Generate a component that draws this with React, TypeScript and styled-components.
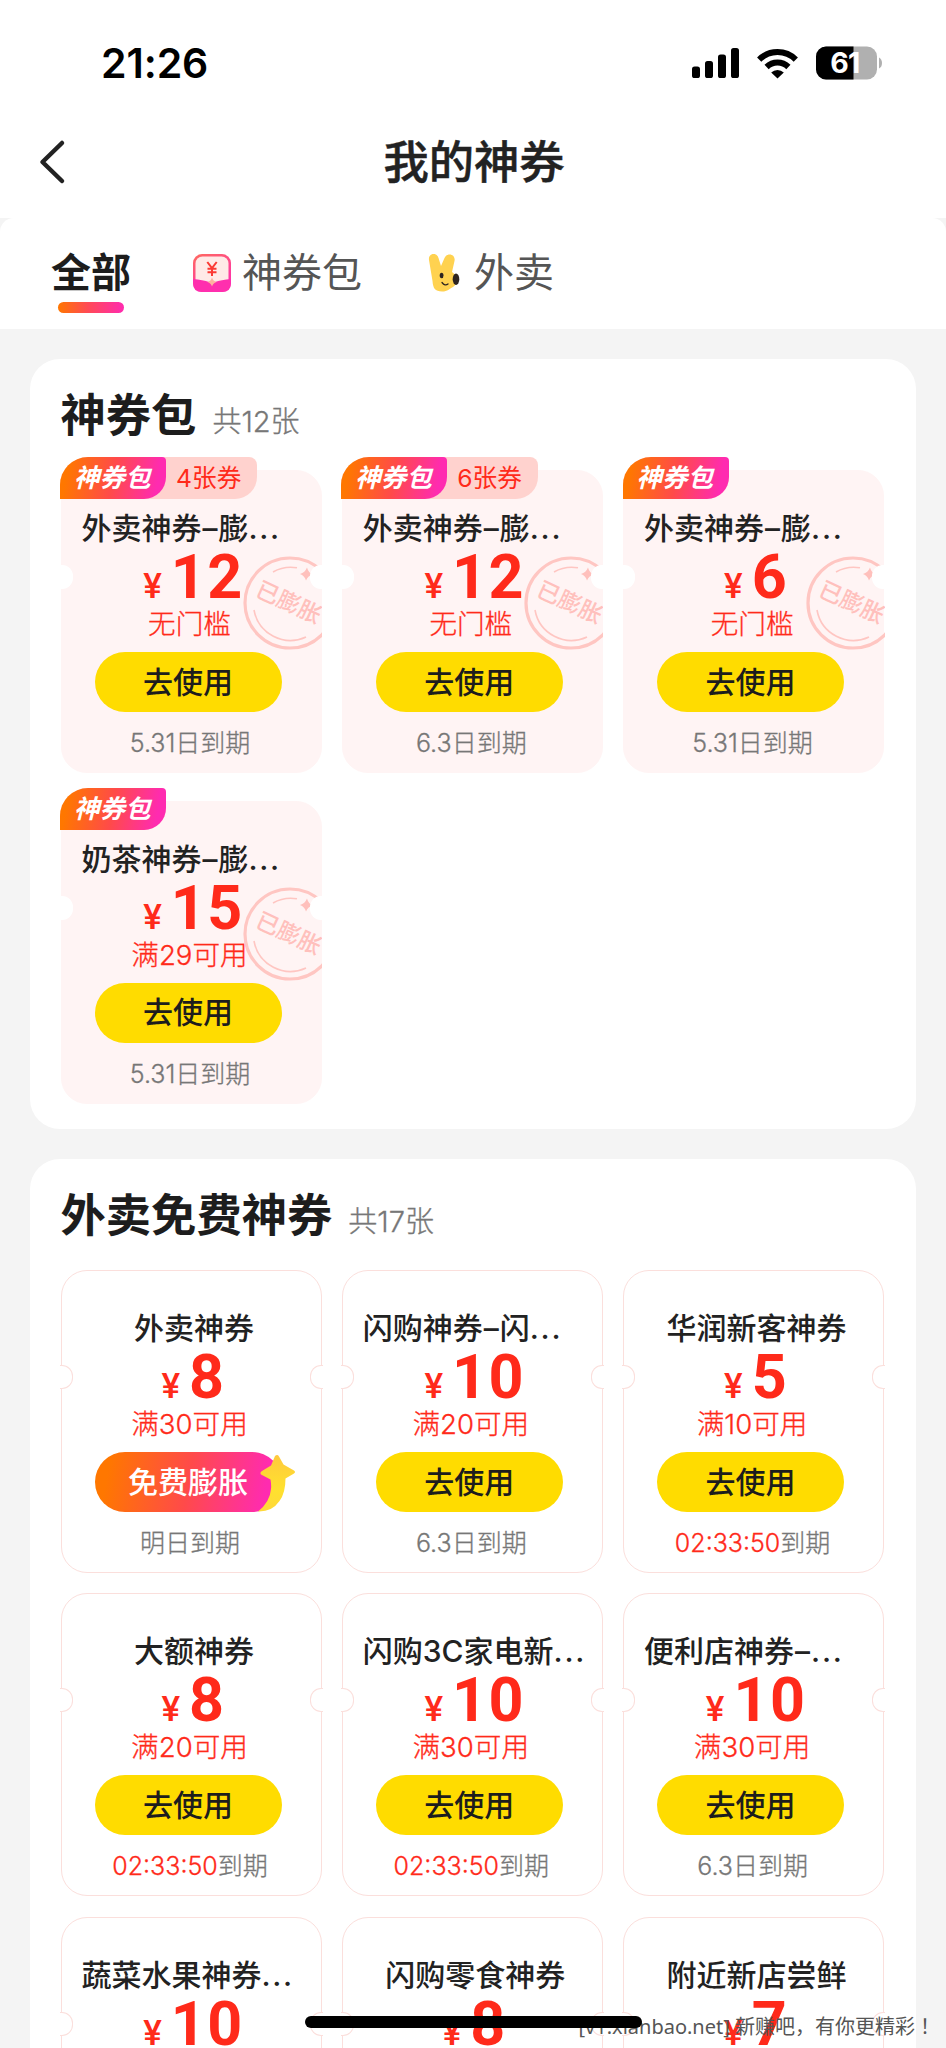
import React from "react";
import styled, { createGlobalStyle, css } from "styled-components";

const GlobalStyle = createGlobalStyle`
  * { box-sizing: border-box; }
  html, body { margin: 0; padding: 0; background: #f4f4f4; }
  body { font-family: Inter, "Noto Sans CJK SC", sans-serif; color: #222; }
`;

const BRAND = "linear-gradient(100deg, #ff7700 8%, #ff4a4a 50%, #ff2bb0 90%)";

const Screen = styled.div`
  position: relative;
  width: 946px;
  height: 2048px;
  overflow: hidden;
  background: #f4f4f4;
`;

const StatusBar = styled.div`
  height: 108px;
  padding: 18px 64px 0 101px;
  display: flex;
  align-items: center;
  justify-content: space-between;
  background: #fff;
`;

const Clock = styled.div`
  font-size: 41px;
  font-weight: 600;
  color: #000;
  letter-spacing: -0.1px;
`;

const StatusIcons = styled.div`
  display: flex;
  align-items: center;
`;

const NavBar = styled.header`
  height: 110px;
  display: grid;
  grid-template-columns: 122px 1fr 120px;
  align-items: center;
  background: #fff;
`;

const BackButton = styled.button`
  border: 0;
  background: none;
  padding: 0 0 2px 38px;
  height: 48px;
  display: flex;
  align-items: center;
`;

const PageTitle = styled.h1`
  margin: 0;
  text-align: center;
  font-size: 45.3px;
  line-height: 60px;
  font-weight: 500;
  -webkit-text-stroke: 0.5px #222;
`;

const TabBar = styled.nav`
  height: 111px;
  padding: 26px 0 0 51px;
  display: flex;
  background: #fff;
  border-radius: 14px 14px 0 0;
`;

const Tab = styled.div<{ $active?: boolean; $gap: number }>`
  height: 76px;
  margin-right: ${(p) => p.$gap}px;
  display: flex;
  align-items: flex-start;
  font-size: 40px;
  line-height: 58px;
  color: ${(p) => (p.$active ? "#1d1d1d" : "#555")};
  font-weight: ${(p) => (p.$active ? 700 : 400)};
  ${(p) =>
    p.$active &&
    css`
      flex-direction: column;
      align-items: center;
      &::after {
        content: "";
        width: 66px;
        height: 11px;
        border-radius: 6px;
        background: linear-gradient(90deg, #ff7700, #ff4a55 45%, #ff2bb0);
      }
    `}
  svg { margin-top: 10px; flex: none; }
`;

const Section = styled.section<{ $height: number }>`
  width: 886px;
  height: ${(p) => p.$height}px;
  margin: 30px 0 0 30px;
  padding: 28px 30.5px 0;
  border-radius: 30px;
  background: #fff;
`;

const SectionHead = styled.div`
  height: 56px;
  display: flex;
  align-items: baseline;
  gap: 17px;
  line-height: 57px;
`;

const SectionTitle = styled.h2`
  margin: 0;
  font-size: 45.3px;
  font-weight: 700;
  color: #1d1d1d;
`;

const SectionCount = styled.span`
  margin-left: -1px;
  font-size: 29px;
  font-weight: 300;
  color: #777;
  -webkit-text-stroke: 0.3px #777;
`;

const Grid = styled.div<{ $rowGap: number }>`
  margin-top: 27px;
  display: grid;
  grid-template-columns: repeat(3, 261px);
  column-gap: 20.3px;
  row-gap: ${(p) => p.$rowGap}px;
`;

const Ticket = styled.article<{ $filled?: boolean }>`
  --line: #fbdfdc;
  position: relative;
  height: 303px;
  border-radius: 26px;
  background: ${(p) => (p.$filled ? "#fff4f4" : "#fff")};
  border: 1.5px solid ${(p) => (p.$filled ? "#fff4f4" : "var(--line)")};
  padding-top: 35px;
  display: flex;
  flex-direction: column;
  align-items: center;

  &::before,
  &::after {
    content: "";
    position: absolute;
    z-index: 2;
    top: 94px;
    width: 12px;
    height: 22px;
    background: #fff;
    border: 1.5px solid ${(p) => (p.$filled ? "#fff" : "var(--line)")};
  }
  &::before { left: -2px; border-left: 0; border-radius: 0 11px 11px 0; }
  &::after { right: -2px; border-right: 0; border-radius: 11px 0 0 11px; }
`;

const TicketName = styled.div<{ $cut?: boolean }>`
  width: 225px;
  margin-left: 6px;
  height: 44px;
  line-height: 44px;
  font-size: 30px;
  font-weight: 500;
  white-space: nowrap;
  text-align: ${(p) => (p.$cut ? "left" : "center")};
`;

const Dots = styled.span`
  letter-spacing: 1.7px;
`;

const Dash = styled.span`
  display: inline-block;
  padding: 0 1px;
`;

const Amount = styled.div`
  height: 57px;
  margin-left: 5px;
  display: flex;
  align-items: baseline;
  gap: 9px;
  font-family: Roboto, sans-serif;
  color: #ff2a1a;
  line-height: 55px;
`;

const Currency = styled.span`
  font-size: 35px;
  font-weight: 500;
`;

const Digits = styled.span`
  font-size: 61px;
  font-weight: 700;
  letter-spacing: 1.5px;
`;

const Condition = styled.div`
  height: 32px;
  margin-right: 3px;
  line-height: 35px;
  font-size: 27.6px;
  font-weight: 300;
  color: #ff2a1a;
  -webkit-text-stroke: 0.3px #ff2a1a;
`;

const UseButton = styled.button<{ $boost?: boolean }>`
  position: relative;
  flex: none;
  width: 187px;
  height: 60px;
  margin: 13px 6px 0 0;
  padding: 0;
  border: 0;
  border-radius: 30px;
  font-family: inherit;
  font-size: 30px;
  font-weight: 500;
  line-height: 59px;
  color: ${(p) => (p.$boost ? "#fff" : "#1d1d1d")};
  background: ${(p) => (p.$boost ? BRAND : "#ffdc00")};
  svg { position: absolute; right: -13px; top: 1px; }
`;

const Expiry = styled.div`
  height: 32px;
  margin: 15px 2px 0 0;
  line-height: 32px;
  font-size: 25px;
  font-weight: 300;
  color: #777;
  -webkit-text-stroke: 0.3px currentColor;
`;

const Countdown = styled.span`
  color: #ff2a1a;
`;

const Ribbon = styled.div`
  position: absolute;
  left: -1.5px;
  top: -14px;
  height: 42px;
  display: flex;
  border-radius: 28px 8px 22px 0;
  background: #ffd2ce;
`;

const RibbonLabel = styled.span`
  width: 106px;
  padding-left: 14px;
  border-radius: 28px 4px 22px 0;
  background: ${BRAND};
  color: #fff;
  font-size: 25.5px;
  font-weight: 700;
  font-style: italic;
  line-height: 42px;
`;

const RibbonCount = styled.span`
  width: 91px;
  padding-left: 10px;
  font-size: 24.7px;
  line-height: 43px;
  color: #ff2a1a;
`;

const StampClip = styled.div`
  position: absolute;
  right: -1.5px;
  top: 84px;
  width: 80px;
  height: 98px;
  overflow: hidden;
`;

const HomeIndicator = styled.div`
  position: absolute;
  z-index: 4;
  left: 305px;
  top: 2016px;
  width: 337px;
  height: 12px;
  border-radius: 6px;
  background: #000;
`;

const Watermark = styled.div`
  position: absolute;
  z-index: 3;
  right: 11px;
  top: 2012px;
  font: 20px/30px "Noto Sans", "Noto Sans CJK JP", sans-serif;
  color: #555;
  white-space: nowrap;
`;

const SignalIcon = () => (
  <svg width="48" height="30" viewBox="0 0 48 30">
    <rect x="0" y="18.5" width="8" height="11.5" rx="2.6" />
    <rect x="13" y="13" width="8" height="17" rx="2.6" />
    <rect x="26" y="6.5" width="8" height="23.5" rx="2.6" />
    <rect x="39" y="0" width="8" height="30" rx="2.6" />
  </svg>
);

const WifiIcon = () => (
  <svg width="41" height="31" viewBox="0 0 41 31" fill="none" stroke="#000" strokeWidth="6" style={{ marginLeft: 17 }}>
    <path d="M2.2 11.600A26 26 0 0 1 38.800 11.600" />
    <path d="M9.600 19A15.600 15.600 0 0 1 31.400 19" />
    <path d="M20.500 30.500L14.200 24.500A9 9 0 0 1 26.800 24.500Z" fill="#000" stroke="none" />
  </svg>
);

const BatteryIcon = () => (
  <svg width="66" height="34" viewBox="0 0 66 34" style={{ marginLeft: 18 }}>
    <rect x="0" y="0.5" width="61" height="33" rx="10" fill="#b0b0b0" />
    <path d="M10 .5H37.500V33.500H10A10 10 0 0 1 0 23.500V10.500A10 10 0 0 1 10 .5Z" fill="#000" />
    <path d="M63 11.500Q66 13 66 17T63 22.500Z" fill="#b0b0b0" />
    <text x="28.800" y="27" textAnchor="middle" fontFamily="Inter" fontWeight="700" fontSize="28.500" letterSpacing="-0.800" fill="#fff">61</text>
  </svg>
);

const PackIcon = () => (
  <svg width="38" height="38" viewBox="0 0 38 38" style={{ marginRight: 11 }}>
    <defs>
      <linearGradient id="pack" x1="0" y1="0" x2="0.5" y2="1">
        <stop offset="0" stopColor="#ff6a5e" />
        <stop offset="1" stopColor="#ff2fae" />
      </linearGradient>
    </defs>
    <rect width="38" height="38" rx="9" fill="url(#pack)" />
    <rect x="2.500" y="2.500" width="33" height="30" rx="7" fill="#ffeae7" />
    <path d="M0 25Q10 26 16 28Q19 30 22 28Q28 26 38 25V29Q38 38 29 38H9Q0 38 0 29Z" fill="#ff2fae" />
    <path d="M19 23.500Q20 27 23.500 28Q20 29 19 32.500Q18 29 14.500 28Q18 27 19 23.500Z" fill="#ffb3a0" />
    <path d="M14.300 8L19 14.200L23.700 8M19 14V22M14.500 14.700H23.500M14.500 18.300H23.500" stroke="#fb3a34" strokeWidth="2" fill="none" />
  </svg>
);

const RabbitIcon = () => (
  <svg width="34" height="38" viewBox="0 0 34 38" style={{ marginRight: 12 }}>
    <path d="M1 6C0-1 9-2 10.500 4L13 12L16.500 4C19-2 28 0 26.500 7L24 18C30 22 30 30 25 33C21 35 20 37.500 14 37.500C7 37.500 5 34 4.500 27Z" fill="#ffd250" />
    <ellipse cx="28" cy="25.200" rx="3.300" ry="5.800" fill="#2d2420" />
    <ellipse cx="13.600" cy="21.500" rx="1.900" ry="2.800" fill="#2d2420" />
    <path d="M14 28.500Q17 32.500 20 30" stroke="#2d2420" strokeWidth="1.300" fill="none" strokeLinecap="round" />
  </svg>
);

const StarTail = () => (
  <svg width="40" height="60" viewBox="0 0 40 60">
    <defs>
      <linearGradient id="tail" x1="0.3" y1="0" x2="0.3" y2="1">
        <stop offset="0" stopColor="#ffc93e" />
        <stop offset="0.6" stopColor="#ffe12e" />
        <stop offset="1" stopColor="#ffd83a" />
      </linearGradient>
    </defs>
    <path d="M20 3Q22.500 1 24 3.500L28.500 11.500L39 17.500Q41 19 39 20.500L30.500 25.500Q30.500 40 24.500 48Q17 59 3 58.500Q15 49 16 36Q16.500 32 15.500 26.500L6 21.500Q4.500 19.500 7 18L16 12.500Z" fill="url(#tail)" />
  </svg>
);

const Stamp = () => (
  <StampClip>
    <svg width="96" height="96" viewBox="0 0 96 96" fill="none" stroke="#ffc6c2">
      <circle cx="48" cy="48" r="45" strokeWidth="3.200" />
      <path d="M31 17A36 36 0 0 1 55 12.800" strokeWidth="1.600" />
      <path d="M12 55A37 37 0 0 0 64 82" strokeWidth="1.600" />
      <path d="M65 12.500Q66.500 18 71 19.500Q66 20.500 64 25.500Q62.500 20.500 58 19Q63 17.500 65 12.500Z" fill="#ffc0bc" stroke="none" />
      <text x="47" y="56" transform="rotate(25 48 47)" textAnchor="middle" fontFamily="Noto Sans CJK SC" fontWeight="500" fontSize="23" fill="#ffc0bc" stroke="none">已膨胀</text>
    </svg>
  </StampClip>
);

type Coupon = {
  name: string;
  amount: string;
  condition: string;
  timer?: string;
  expiry: string;
  pack?: boolean;
  count?: string;
  boost?: boolean;
};

const packCoupons: Coupon[] = [
  { name: "外卖神券–膨…", amount: "12", condition: "无门槛", expiry: "5.31日到期", pack: true, count: "4张券" },
  { name: "外卖神券–膨…", amount: "12", condition: "无门槛", expiry: "6.3日到期", pack: true, count: "6张券" },
  { name: "外卖神券–膨…", amount: "6", condition: "无门槛", expiry: "5.31日到期", pack: true },
  { name: "奶茶神券–膨…", amount: "15", condition: "满29可用", expiry: "5.31日到期", pack: true },
];

const freeCoupons: Coupon[] = [
  { name: "外卖神券", amount: "8", condition: "满30可用", expiry: "明日到期", boost: true },
  { name: "闪购神券–闪…", amount: "10", condition: "满20可用", expiry: "6.3日到期" },
  { name: "华润新客神券", amount: "5", condition: "满10可用", timer: "02:33:50", expiry: "到期" },
  { name: "大额神券", amount: "8", condition: "满20可用", timer: "02:33:50", expiry: "到期" },
  { name: "闪购3C家电新…", amount: "10", condition: "满30可用", timer: "02:33:50", expiry: "到期" },
  { name: "便利店神券–…", amount: "10", condition: "满30可用", expiry: "6.3日到期" },
  { name: "蔬菜水果神券…", amount: "10", condition: "满30可用", expiry: "6.3日到期" },
  { name: "闪购零食神券", amount: "8", condition: "满30可用", expiry: "6.3日到期" },
  { name: "附近新店尝鲜", amount: "7", condition: "满30可用", expiry: "6.3日到期" },
];

const CouponName = ({ name }: { name: string }) => {
  const cut = name.endsWith("…");
  const [head, tail] = (cut ? name.slice(0, -1) : name).split("–");
  return (
    <TicketName $cut={cut}>
      {head}
      {tail !== undefined && <Dash>–</Dash>}
      {tail}
      {cut && <Dots>...</Dots>}
    </TicketName>
  );
};

const CouponCard = ({ c }: { c: Coupon }) => (
  <Ticket $filled={c.pack}>
    {c.pack && (
      <>
        <Stamp />
        <Ribbon>
          <RibbonLabel>神券包</RibbonLabel>
          {c.count && <RibbonCount>{c.count}</RibbonCount>}
        </Ribbon>
      </>
    )}
    <CouponName name={c.name} />
    <Amount>
      <Currency>¥</Currency>
      <Digits>{c.amount}</Digits>
    </Amount>
    <Condition>{c.condition}</Condition>
    <UseButton $boost={c.boost}>
      {c.boost ? "免费膨胀" : "去使用"}
      {c.boost && <StarTail />}
    </UseButton>
    <Expiry>
      {c.timer && <Countdown>{c.timer}</Countdown>}
      {c.expiry}
    </Expiry>
  </Ticket>
);

export default function App() {
  return (
    <>
      <GlobalStyle />
      <Screen>
        <StatusBar>
          <Clock>21:26</Clock>
          <StatusIcons>
            <SignalIcon />
            <WifiIcon />
            <BatteryIcon />
          </StatusIcons>
        </StatusBar>
        <NavBar>
          <BackButton aria-label="返回">
            <svg width="28" height="46" viewBox="0 0 28 46" fill="none" stroke="#222" strokeWidth="4.500" strokeLinecap="round" strokeLinejoin="round">
              <path d="M24 4L4.500 23L24 42" />
            </svg>
          </BackButton>
          <PageTitle>我的神券</PageTitle>
        </NavBar>
        <TabBar>
          <Tab $active $gap={62}>全部</Tab>
          <Tab $gap={66}>
            <PackIcon />
            神券包
          </Tab>
          <Tab $gap={0}>
            <RabbitIcon />
            外卖
          </Tab>
        </TabBar>
        <Section $height={770}>
          <SectionHead>
            <SectionTitle>神券包</SectionTitle>
            <SectionCount>共12张</SectionCount>
          </SectionHead>
          <Grid $rowGap={27.5}>
            {packCoupons.map((c, i) => (
              <CouponCard key={i} c={c} />
            ))}
          </Grid>
        </Section>
        <Section $height={1100}>
          <SectionHead>
            <SectionTitle>外卖免费神券</SectionTitle>
            <SectionCount>共17张</SectionCount>
          </SectionHead>
          <Grid $rowGap={20.3}>
            {freeCoupons.map((c, i) => (
              <CouponCard key={i} c={c} />
            ))}
          </Grid>
        </Section>
        <HomeIndicator />
        <Watermark>[v1.xianbao.net] 新赚吧，有你更精彩！</Watermark>
      </Screen>
    </>
  );
}
